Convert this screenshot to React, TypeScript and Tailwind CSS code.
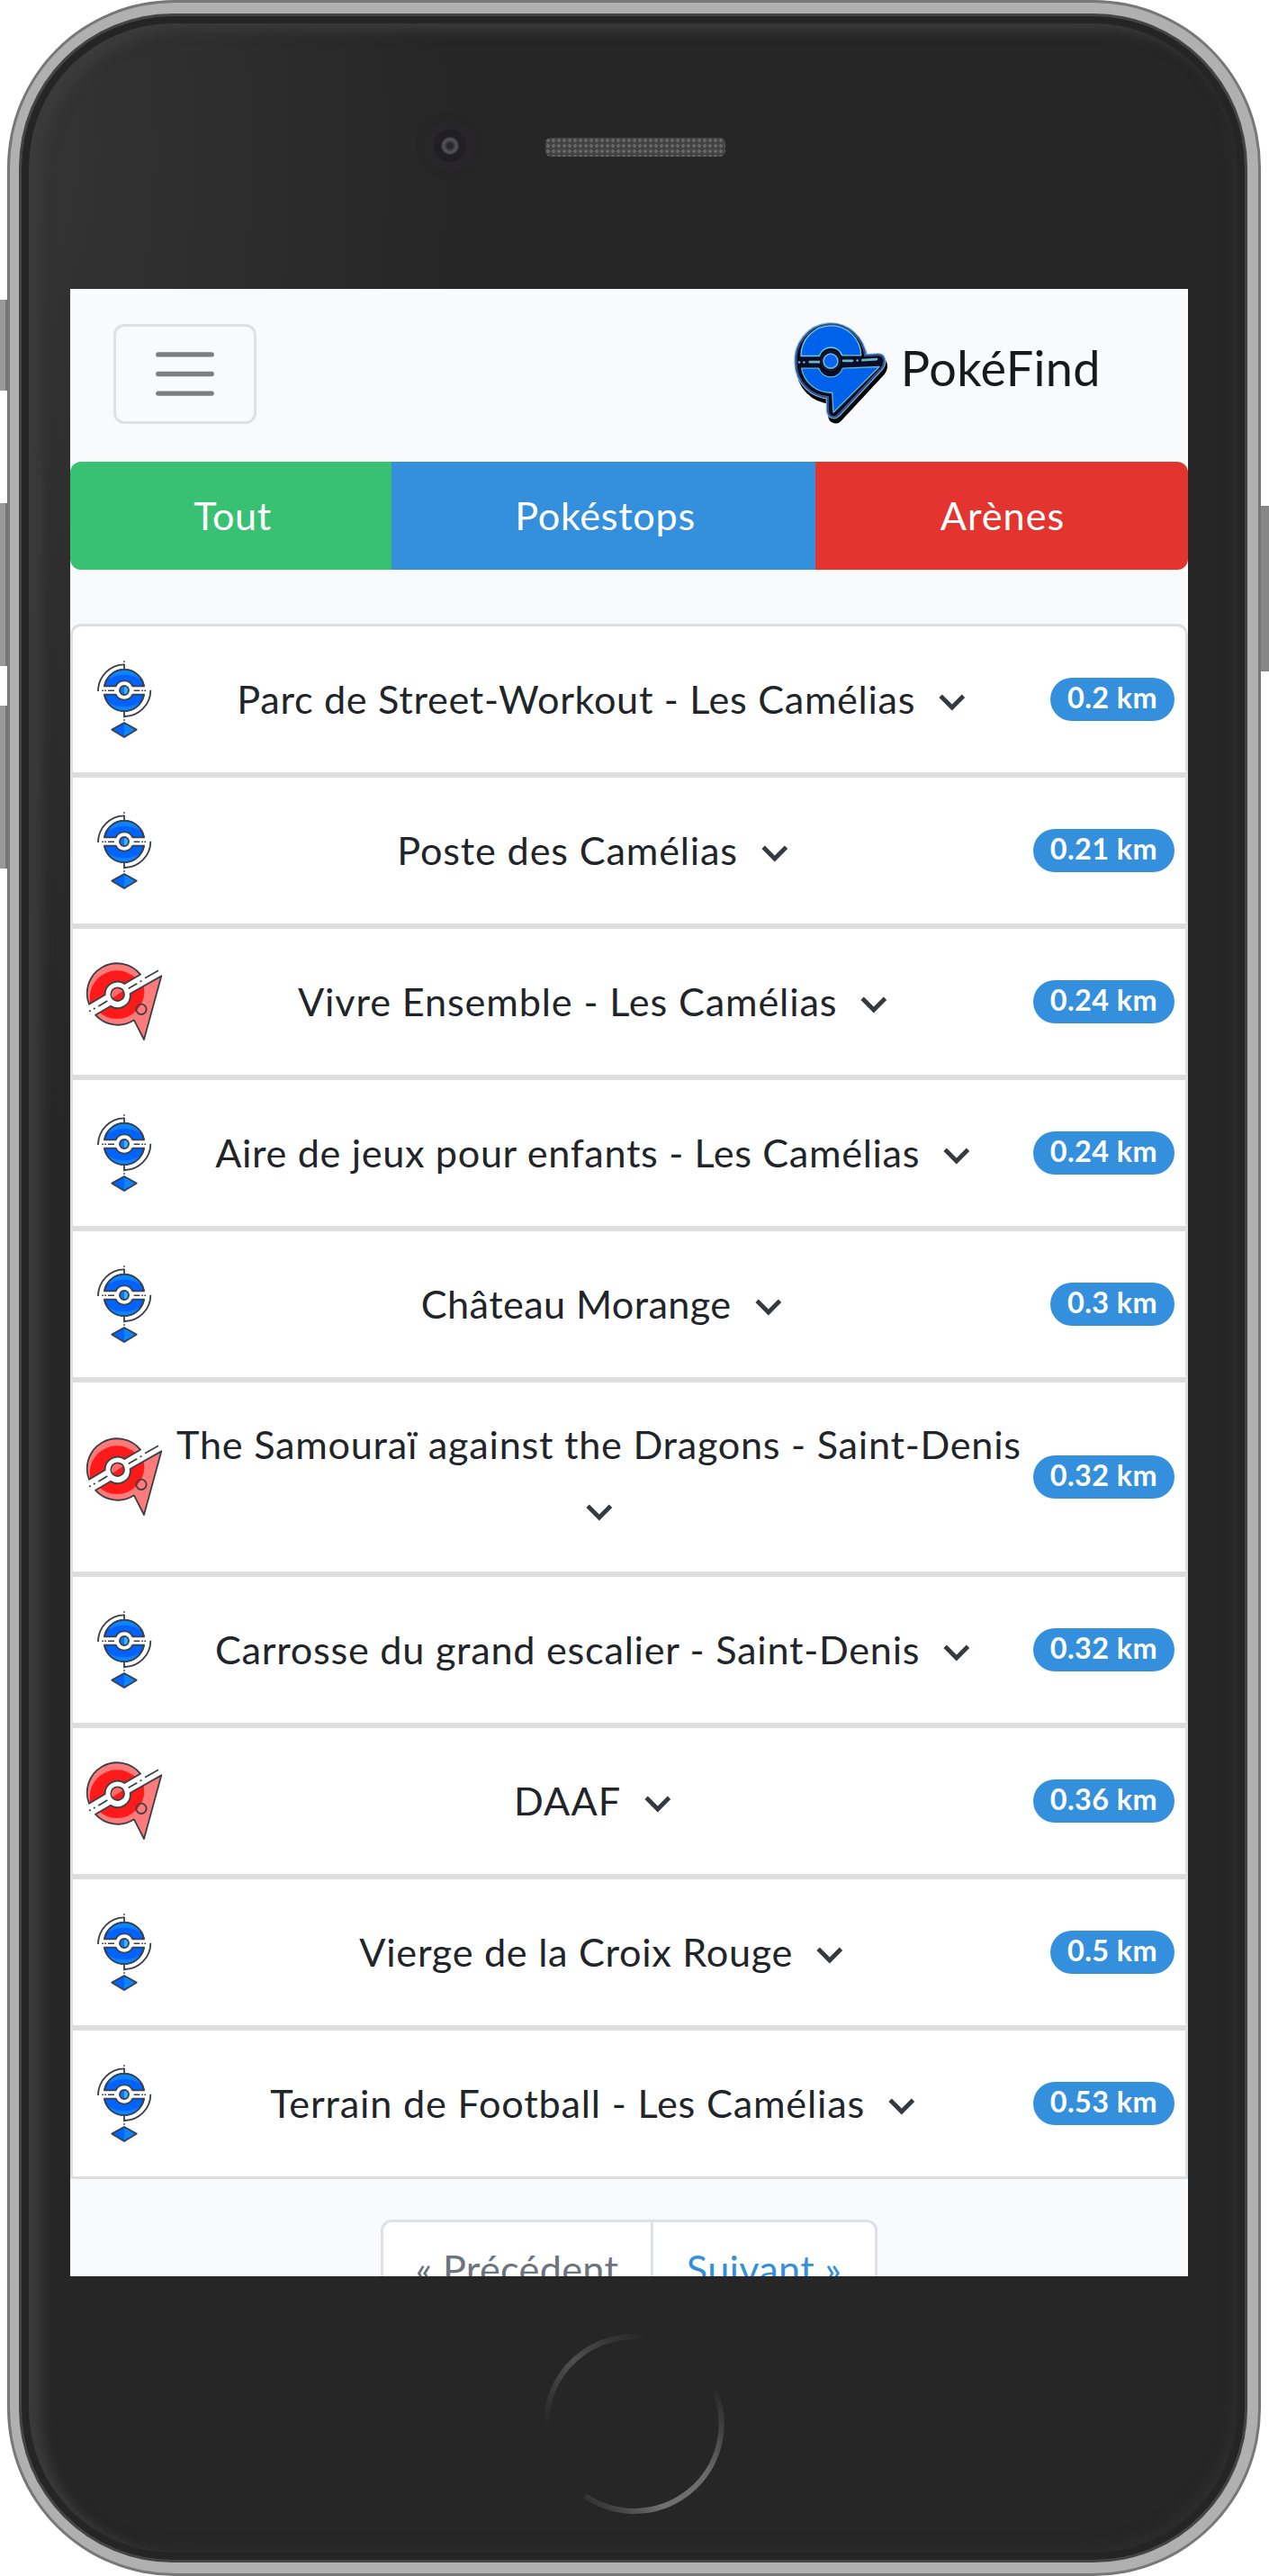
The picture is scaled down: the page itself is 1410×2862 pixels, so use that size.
type Place = {
  name: string;
  distance: string;
  kind: "stop" | "gym";
  tracking: string;
  wrap?: boolean;
};

const places: Place[] = [
  { name: "Parc de Street-Workout - Les Camélias", distance: "0.2 km", kind: "stop", tracking: "tracking-[0.69px]" },
  { name: "Poste des Camélias", distance: "0.21 km", kind: "stop", tracking: "tracking-[0.85px]" },
  { name: "Vivre Ensemble - Les Camélias", distance: "0.24 km", kind: "gym", tracking: "tracking-[0.88px]" },
  { name: "Aire de jeux pour enfants - Les Camélias", distance: "0.24 km", kind: "stop", tracking: "tracking-[0.66px]" },
  { name: "Château Morange", distance: "0.3 km", kind: "stop", tracking: "tracking-[0.4px]" },
  { name: "The Samouraï against the Dragons - Saint-Denis", distance: "0.32 km", kind: "gym", tracking: "tracking-[0.75px]", wrap: true },
  { name: "Carrosse du grand escalier - Saint-Denis", distance: "0.32 km", kind: "stop", tracking: "tracking-[0.75px]" },
  { name: "DAAF", distance: "0.36 km", kind: "gym", tracking: "tracking-[1.1px]" },
  { name: "Vierge de la Croix Rouge", distance: "0.5 km", kind: "stop", tracking: "tracking-[0.72px]" },
  { name: "Terrain de Football - Les Camélias", distance: "0.53 km", kind: "stop", tracking: "tracking-[0.83px]" },
];

function StopIcon() {
  return (
    <svg viewBox="39 36 270 270" className="size-[90px] shrink-0" fill="none" stroke="#3b4148" strokeWidth="5.5" strokeLinejoin="round">
      <path d="M87 144A88 89 0 0 1 174 55M262 140A88 88 0 0 1 174 228" />
      <path d="M174 53V76M174 208V232" />
      <path d="M174 42V48M174 237V243" strokeWidth="4" />
      <path d="M108 127A67 67 0 0 1 240 127H202A31 31 0 0 0 146 127Z" fill="#0062ff" />
      <path d="M116 106A67 67 0 0 1 232 106Q174 72 116 106Z" fill="#0a84ff" stroke="none" />
      <path d="M108 155A67 67 0 0 0 240 155H202A31 31 0 0 1 146 155Z" fill="#0062ff" />
      <path d="M118 180A64 64 0 0 0 230 180Q174 212 118 180Z" fill="#0a84ff" stroke="none" />
      <path d="M108 127A67 67 0 0 1 240 127M108 155A67 67 0 0 0 240 155" />
      <circle cx="174" cy="141" r="15" fill="#0f74f5" />
      <path d="M174 129A12 12 0 0 1 174 153Z" fill="#35b4ff" stroke="none" />
      <path d="M120 142H141M206 142H226" strokeWidth="4.5" />
      <path d="M100 142h5M109 142h5M232 142h5M241 142h5" strokeWidth="4.5" />
      <path d="M133 272L174 249V297Z" fill="#0062ff" stroke="none" />
      <path d="M174 249L215 272L174 297Z" fill="#0a84ff" stroke="none" />
      <path d="M133 272L174 249L215 272L174 297Z" />
    </svg>
  );
}

function GymIcon() {
  return (
    <svg viewBox="39 24 270 270" className="size-[90px] shrink-0" fill="none" stroke="#3b4148" strokeWidth="5.5" strokeLinejoin="round">
      <defs>
        <clipPath id="gym-upper">
          <path d="M57 167A100 100 0 0 1 228 68L175 99A42 42 0 0 0 110 136Z" />
        </clipPath>
        <clipPath id="gym-lower">
          <path d="M78 203L129 173A42 42 0 0 0 194 132L298 73L240 285L207 220A100 100 0 0 1 78 203Z" />
        </clipPath>
      </defs>
      <g stroke="none">
        <g clipPath="url(#gym-upper)">
          <path d="M0 0H320V320H0Z" fill="#ff7a7a" />
          <circle cx="150" cy="146" r="91" fill="#ff1a1a" />
        </g>
        <g clipPath="url(#gym-lower)">
          <path d="M0 0H320V320H0Z" fill="#ff7a7a" />
          <circle cx="150" cy="125" r="91" fill="#ff1a1a" />
        </g>
      </g>
      <path d="M57 167A100 100 0 0 1 228 68L175 99A42 42 0 0 0 110 136Z" />
      <path d="M78 203L129 173A42 42 0 0 0 194 132L298 73L240 285L207 220A100 100 0 0 1 78 203Z" />
      <circle cx="152" cy="134" r="22" fill="#ff1a1a" />
      <path d="M135 146A20 20 0 0 1 169 124Z" fill="#ff6a6a" stroke="none" />
      <circle cx="231" cy="184" r="17" />
      <path d="M88 174L118 156M188 115L217 98M243 80L288 55" strokeWidth="5" />
      <path d="M57 191L62 188M72 183L77 180M227 92L232 89" strokeWidth="5" />
    </svg>
  );
}

function Logo() {
  const shape =
    "M54 190A110 114 0 0 1 274 171L322 168Q338 168 336 187Q335 197 328 205L186 358Q176 368 166 361Q160 356 160 344V298A108 110 0 0 1 54 190Z";
  return (
    <svg viewBox="38 60 312 332" className="h-[111px] w-[104px] overflow-visible" fill="none" strokeLinejoin="round">
      <g transform="translate(6 16)">
        <path d={shape} fill="#000" stroke="#000" strokeWidth="22" />
      </g>
      <path d={shape} fill="#000" stroke="#67c3cf" strokeWidth="24" />
      <path d={shape} stroke="#3c3fa0" strokeWidth="17" />
      <path d={shape} stroke="#3f8fb0" strokeWidth="7" />
      <path d={shape} fill="#0a0d2a" stroke="#05060f" strokeWidth="5" />
      <path d="M65 166A100 100 0 0 1 265 164H202A40 40 0 0 0 126 166Z" fill="#0062ea" stroke="#6fd0dc" strokeWidth="4" />
      <path d="M67 207A98 96 0 0 0 169 288L173 354L326 202L204 207A42 42 0 0 1 124 207Z" fill="#0062ea" stroke="#5fb8cc" strokeWidth="4" />
      <path d="M94 186H127M206 182H236M270 180L317 177" stroke="#6db6c4" strokeWidth="8" strokeLinecap="round" />
      <circle cx="59" cy="187" r="4" fill="#6db6c4" />
      <circle cx="75" cy="187" r="4" fill="#6db6c4" />
      <circle cx="253" cy="181" r="4" fill="#6db6c4" />
      <circle cx="164" cy="184" r="36" fill="#05060f" />
      <circle cx="164" cy="183" r="32" stroke="#2b3d78" strokeWidth="2" />
      <circle cx="164" cy="183" r="24" fill="#0a66ee" stroke="#6fb4dc" strokeWidth="5" />
    </svg>
  );
}

function Chevron({ className }: { className: string }) {
  return (
    <svg viewBox="0 0 24 24" className={className} fill="#343a40">
      <path d="M7.41 8.59 12 13.17l4.59-4.58L18 10l-6 6-6-6 1.41-1.41z" />
    </svg>
  );
}

function Row({ place, first }: { place: Place; first: boolean }) {
  return (
    <li
      className={`flex items-center justify-between border-[3px] border-[#dedede] bg-white px-3 ${place.wrap ? "h-[216px]" : "h-[168px]"} ${first ? "rounded-t-[12px]" : ""}`}
    >
      {place.kind === "stop" ? <StopIcon /> : <GymIcon />}
      <div className="pb-[3px] text-center text-[43.2px] leading-[72px] whitespace-nowrap text-[#212529]">
        <span className={place.tracking}>{place.name}</span>
        {place.wrap ? <br /> : null}
        <Chevron className={place.wrap ? "inline-block size-[57.6px] align-[-16px]" : "ml-[12px] inline-block size-[57.6px] align-[-16px]"} />
      </div>
      <span className="h-12 shrink-0 rounded-full bg-[#3490dc] px-[19px] text-[32.4px] leading-[43px] font-bold tracking-[0.4px] whitespace-nowrap text-white">
        {place.distance}
      </span>
    </li>
  );
}

function Screen() {
  return (
    <main className="h-[2208px] w-[1242px] overflow-hidden bg-[#f8fafc]">
      <nav className="flex h-48 items-start justify-between pt-[39px] pr-[97px] pl-12">
        <button className="h-[111px] w-[159px] rounded-[12px] border-[3px] border-black/10 px-9 py-3">
          <svg viewBox="0 0 30 30" className="size-[81px]" stroke="#000" strokeOpacity=".5" strokeWidth="2" strokeLinecap="round">
            <path d="M4 7h22M4 15h22M4 23h22" />
          </svg>
        </button>
        <a className="flex items-start">
          <Logo />
          <span className="ml-[16px] pt-[8px] text-[54px] leading-[81px] tracking-[0.4px] text-black/90">PokéFind</span>
        </a>
      </nav>
      <div className="flex h-[120px] overflow-hidden rounded-[12px] text-center text-[43.2px] leading-[116px] text-white">
        <button className="w-[357px] bg-[#38c172] pb-[3px] pl-1 tracking-[0.5px]">Tout</button>
        <button className="w-[471px] bg-[#3490dc] pb-[3px] pl-1 tracking-[0.7px]">Pokéstops</button>
        <button className="w-[414px] bg-[#e3342f] pb-[3px] pl-0.5 tracking-[1px]">Arènes</button>
      </div>
      <ul className="mt-[60px]">
        {places.map((place, i) => (
          <Row key={place.name} place={place} first={i === 0} />
        ))}
      </ul>
      <div className="mt-[45px] flex justify-center">
        <div className="flex h-[120px] w-[552px] rounded-[12px] border-[3px] border-[#dee2e6] bg-white text-center text-[43.2px] leading-[102px]">
          <span className="w-[300px] border-r-[3px] border-[#dee2e6] tracking-[0.3px] text-[#6c757d]">« Précédent</span>
          <span className="flex-1 tracking-[0.3px] text-[#3490dc]">Suivant »</span>
        </div>
      </div>
    </main>
  );
}

export default function App() {
  return (
    <div className="relative h-[2862px] w-[1410px] overflow-hidden bg-white font-['Lato',sans-serif]">
      <div className="absolute top-[333px] left-0 h-[101px] w-[9px] border-r-[3px] border-[#777] bg-[#999]" />
      <div className="absolute top-[559px] left-0 h-[181px] w-[9px] border-r-[3px] border-[#777] bg-[#999]" />
      <div className="absolute top-[784px] left-0 h-[181px] w-[9px] border-r-[3px] border-[#777] bg-[#999]" />
      <div className="absolute top-[562px] right-0 h-[184px] w-[10px] bg-[#868686]" />
      <div className="relative ml-[8px] h-[2862px] w-[1393px] rounded-[186px] bg-[#777] p-[3px]">
        <div className="h-full rounded-[183px] bg-[#b0b0b0] pt-[12px] pr-[12px] pb-[12px] pl-[10px]">
          <div className="h-full rounded-[171px] bg-[#444] p-[3px]">
            <div className="flex h-full flex-col items-start rounded-[168px] bg-[#262626] bg-[radial-gradient(ellipse_480px_1100px_at_0px_150px,#343434,#262626)] shadow-[inset_0_0_0_8px_#252525,inset_14px_8px_14px_8px_#3b3b3b,inset_-8px_-8px_14px_6px_#2d2d2d]">
              <div className="h-[303px] pl-[582px]">
                <div className="relative mt-[135px] h-[21px] w-[200px] rounded-[6px] bg-[#434343] bg-[radial-gradient(#666_1.8px,transparent_2px)] bg-[size:6px_6px]">
                  <div className="absolute top-[-9px] left-[-124px] size-9 rounded-full bg-[#201f25] p-2 shadow-[0_0_12px_6px_#29262d]">
                    <div className="size-5 rounded-full bg-[radial-gradient(circle,#26262c_20%,#55555c_50%,#29292d_75%)]" />
                  </div>
                </div>
              </div>
              <div className="ml-[54px]">
                <Screen />
              </div>
              <svg viewBox="0 0 204 204" className="mt-[62px] ml-[578px] size-[204px]" fill="none" strokeWidth="6">
                <defs>
                  <linearGradient id="home-upper" x1="0" y1="1" x2="1" y2="0">
                    <stop offset="0" stopColor="#262626" />
                    <stop offset=".5" stopColor="#505050" />
                    <stop offset="1" stopColor="#262626" />
                  </linearGradient>
                  <linearGradient id="home-lower" x1="1" y1="0" x2="0" y2="1">
                    <stop offset="0" stopColor="#262626" />
                    <stop offset=".4" stopColor="#6a6a6a" />
                    <stop offset=".7" stopColor="#707070" />
                    <stop offset="1" stopColor="#262626" />
                  </linearGradient>
                </defs>
                <path d="M5 104A97 97 0 0 1 115 6" stroke="url(#home-upper)" />
                <path d="M192 64A97 97 0 0 1 48 182" stroke="url(#home-lower)" />
              </svg>
            </div>
          </div>
        </div>
      </div>
    </div>
  );
}
